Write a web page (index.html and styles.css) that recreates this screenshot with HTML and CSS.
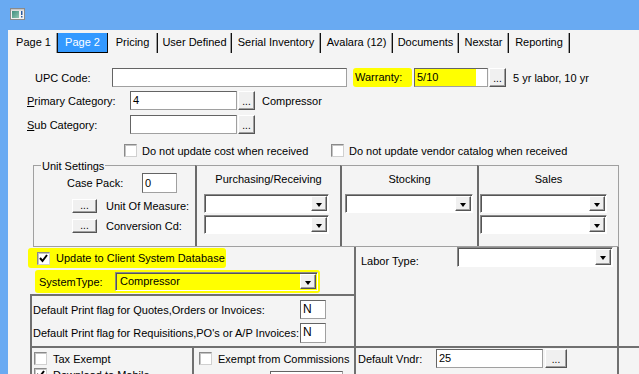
FILE: index.html
```html
<!DOCTYPE html>
<html lang="en">
<head>
  <meta charset="UTF-8">
  <title>Item Maintenance</title>
  <link rel="stylesheet" href="styles.css">
</head>
<body>
  <div class="titlebar">
    <svg class="appicon" viewBox="0 0 15 12" width="15" height="12">
      <defs>
        <linearGradient id="ig" x1="0" y1="0" x2="1" y2="1">
          <stop offset="0" stop-color="#3f8f7f"/>
          <stop offset="1" stop-color="#8fc4b0"/>
        </linearGradient>
      </defs>
      <rect x="0.5" y="0.5" width="14" height="11" fill="#f2f2f2" stroke="#8a8a8a"/>
      <rect x="1" y="1" width="13" height="1.5" fill="#c8c8c8"/>
      <rect x="2" y="3" width="7" height="7" fill="url(#ig)"/>
      <rect x="11" y="3" width="1.5" height="4" fill="#2a5aa0"/>
      <rect x="11" y="8" width="1.5" height="1.5" fill="#2a5aa0"/>
    </svg>
  </div>

  <div class="client">
    <div class="tabs">
      <div class="tab w48">Page 1</div>
      <div class="tab active w50">Page 2</div>
      <div class="tab w50">Pricing</div>
      <div class="tab w74">User Defined</div>
      <div class="tab w89">Serial Inventory</div>
      <div class="tab w72">Avalara (12)</div>
      <div class="tab w66">Documents</div>
      <div class="tab w50">Nexstar</div>
      <div class="tab w61">Reporting</div>
    </div>

    <div class="page">
      <div class="row r-upc">
        <span class="lbl w-upc">UPC Code:</span>
        <span class="field w-upcfield"></span>
        <span class="hl hl-warranty">Warranty:</span>
        <span class="field field-hl w-warranty">5/10</span>
        <span class="btn w-dots">...</span>
        <span class="note">5 yr labor, 10 yr</span>
      </div>
      <div class="row r-prim">
        <span class="lbl w-cat"><u>P</u>rimary Category:</span>
        <span class="field w-catfield">4</span>
        <span class="btn w-dots">...</span>
        <span class="note">Compressor</span>
      </div>
      <div class="row r-sub">
        <span class="lbl w-cat"><u>S</u>ub Category:</span>
        <span class="field w-catfield"></span>
        <span class="btn w-dots">...</span>
      </div>
      <div class="row r-checks">
        <span class="check-item w-check1"><span class="cb"></span>Do not update cost when received</span>
        <span class="check-item"><span class="cb"></span>Do not update vendor catalog when received</span>
      </div>

      <div class="units">
        <div class="unitset">
          <div class="legend">Unit Settings</div>
          <div class="urow u-case">
            <span class="lbl w-case">Case Pack:</span>
            <span class="field w-casefield">0</span>
          </div>
          <div class="urow u-btn">
            <span class="btn w-ubtn">...</span>
            <span class="ulabel">Unit Of Measure:</span>
          </div>
          <div class="urow u-btn">
            <span class="btn w-ubtn">...</span>
            <span class="ulabel">Conversion Cd:</span>
          </div>
        </div>
        <div class="ucol c-purch">
          <div class="colhead">Purchasing/Receiving</div>
          <div class="combo"><span class="combo-text"></span><span class="arrow"></span></div>
          <div class="combo"><span class="combo-text"></span><span class="arrow"></span></div>
        </div>
        <div class="ucol c-stock">
          <div class="colhead">Stocking</div>
          <div class="combo"><span class="combo-text"></span><span class="arrow"></span></div>
        </div>
        <div class="ucol c-sales">
          <div class="colhead">Sales</div>
          <div class="combo"><span class="combo-text"></span><span class="arrow"></span></div>
          <div class="combo"><span class="combo-text"></span><span class="arrow"></span></div>
        </div>
      </div>

      <div class="lower">
        <div class="lower-left">
          <div class="hl hl-update">
            <span class="cb checked"><svg viewBox="0 0 11 11" width="11" height="11"><polyline points="2,5 4.5,8 9,2" fill="none" stroke="#000" stroke-width="2"/></svg></span>
            Update to Client System Database
          </div>
          <div class="hl hl-system">
            <span class="lbl w-system">SystemType:</span>
            <div class="combo combo-hl"><span class="combo-text">Compressor</span><span class="arrow"></span></div>
          </div>
          <div class="printbox">
            <div class="prow">
              <span class="lbl w-print">Default Print flag for Quotes,Orders or Invoices:</span>
              <span class="field w-flag">N</span>
            </div>
            <div class="prow p-second">
              <span class="lbl w-print">Default Print flag for Requisitions,PO's or A/P Invoices:</span>
              <span class="field w-flag">N</span>
            </div>
          </div>
        </div>
        <div class="laborbox">
          <span class="lbl w-labor">Labor Type:</span>
          <div class="combo w-laborcombo"><span class="combo-text"></span><span class="arrow"></span></div>
        </div>
      </div>

      <div class="bottom">
        <div class="bcol">
          <div class="brow"><span class="cb"></span>Tax Exempt</div>
          <div class="brow"><span class="cb checked"><svg viewBox="0 0 11 11" width="11" height="11"><polyline points="2,5 4.5,8 9,2" fill="none" stroke="#000" stroke-width="2"/></svg></span>Download to Mobile</div>
        </div>
        <div class="bcol b-mid">
          <div class="brow"><span class="cb"></span>Exempt from Commissions</div>
          <span class="field w-midfield"></span>
        </div>
        <div class="bcol b-right">
          <div class="row r-vndr">
            <span class="lbl w-vndr">Default Vndr:</span>
            <span class="field w-vndrfield">25</span>
            <span class="btn w-vbtn">...</span>
          </div>
        </div>
      </div>
    </div>
  </div>
</body>
</html>
```

FILE: styles.css
```css
* {
  box-sizing: border-box;
}

body {
  margin: 0;
  width: 639px;
  height: 374px;
  overflow: hidden;
  background: #69aaf2;
  font: 11px "Liberation Sans", Arial, sans-serif;
  color: #000;
}

.titlebar {
  height: 30px;
  padding: 8px 0 0 10px;
}

.appicon {
  display: block;
}

.client {
  margin-left: 8px;
  height: 344px;
  background: #f4f4f4;
}

/* tab strip */
.tabs {
  display: flex;
  height: 23px;
  padding: 3px 0 0 2px;
}

.tab {
  flex: none;
  height: 20px;
  line-height: 19px;
  text-align: center;
  border-right: 1px solid #111;
  box-shadow: inset -1px 0 #a0a0a0;
  white-space: nowrap;
}

.tab.active {
  background: #3399ff;
  color: #fff;
  border-bottom: 1px solid #000;
  line-height: 18px;
  box-shadow: none;
}

.w48 { width: 48px; }
.w50 { width: 50px; }
.w61 { width: 61px; }
.w66 { width: 66px; }
.w72 { width: 72px; }
.w74 { width: 74px; }
.w89 { width: 89px; }

/* generic controls */
.row {
  display: flex;
  align-items: center;
  height: 19px;
}

.lbl {
  flex: none;
  white-space: nowrap;
}

.field {
  flex: none;
  display: block;
  height: 19px;
  line-height: 17px;
  padding-left: 2px;
  background: #fff;
  border: 1px solid #a0a0a0;
  border-top-color: #646464;
  border-left-color: #646464;
  white-space: nowrap;
}

.btn {
  flex: none;
  display: block;
  height: 19px;
  line-height: 19px;
  text-align: center;
  background: #f0f0f0;
  border: 1px solid #fff;
  border-right-color: #555;
  border-bottom-color: #555;
  box-shadow: inset -1px -1px #a0a0a0;
  font-size: 10px;
}

.note {
  margin-left: 7px;
  white-space: nowrap;
}

.hl {
  background: #ffff00;
  border-radius: 3px;
}

.cb {
  flex: none;
  display: inline-block;
  width: 13px;
  height: 13px;
  background: #fff;
  border: 1px solid #8a8a8a;
  border-right-color: #d0d0d0;
  border-bottom-color: #d0d0d0;
  box-shadow: inset 1px 1px #c4c4c4;
  vertical-align: middle;
}

.cb svg {
  display: block;
  margin: 0;
}

.combo {
  display: flex;
  height: 19px;
  background: #fff;
  border: 1px solid #fff;
  border-top-color: #8a8a8a;
  border-left-color: #8a8a8a;
  box-shadow: inset 1px 1px #555;
  padding: 1px;
}

.combo-text {
  flex: 1;
  line-height: 15px;
  padding-left: 3px;
}

.arrow {
  position: relative;
  width: 16px;
  background: #f0f0f0;
  border: 1px solid #fff;
  border-right-color: #555;
  border-bottom-color: #555;
  box-shadow: inset -1px -1px #a0a0a0;
}

.arrow::after {
  content: "";
  position: absolute;
  left: 4px;
  top: 6px;
  border-left: 3.5px solid transparent;
  border-right: 3.5px solid transparent;
  border-top: 4px solid #000;
}

/* top fields */
.page {
  padding-top: 15px;
}

.r-upc {
  padding-left: 27px;
}

.w-upc { width: 77px; }
.w-upcfield { width: 235px; }

.hl-warranty {
  display: block;
  width: 59px;
  height: 19px;
  line-height: 19px;
  margin-left: 6px;
  padding-left: 2px;
}

.field-hl {
  margin-left: 2px;
  background: linear-gradient(to right, #ffff00 85%, #fff 85%);
}

.w-warranty { width: 74px; }
.w-dots { width: 17px; margin-left: 1px; }

.r-prim {
  margin-top: 4px;
  padding-left: 19px;
}

.r-sub {
  margin-top: 5px;
  padding-left: 19px;
}

.w-cat { width: 103px; }
.w-catfield { width: 107px; }

.r-checks {
  margin-top: 10px;
  height: 13px;
  padding-left: 116px;
}

.check-item {
  display: flex;
  align-items: center;
  gap: 5px;
  white-space: nowrap;
}

.w-check1 { width: 207px; }

/* unit settings block */
.units {
  display: grid;
  grid-template-columns: 162px 145px 137px 142px;
  width: 586px;
  height: 82px;
  margin: 8px 0 0 25px;
  border-bottom: 1px solid #a0a0a0;
}

.unitset {
  border-top: 1px solid #a0a0a0;
  border-left: 1px solid #a0a0a0;
}

.legend {
  width: max-content;
  margin: -6px 0 0 7px;
  padding: 0 1px;
  line-height: 13px;
  background: #f4f4f4;
}

.urow {
  display: flex;
  align-items: center;
}

.u-case {
  height: 20px;
  padding-left: 33px;
}

.w-case { width: 75px; }
.w-casefield { width: 35px; height: 20px; line-height: 18px; }

.u-btn {
  height: 14px;
  margin-top: 6px;
  padding-left: 38px;
}

.w-ubtn {
  width: 25px;
  height: 14px;
  line-height: 11px;
}

.ulabel {
  margin-left: 9px;
  white-space: nowrap;
}

.ucol {
  border-top: 1px solid #a0a0a0;
  border-left: 2px solid #6a6a6a;
}

.c-sales {
  border-right: 1px solid #a0a0a0;
}

.colhead {
  height: 20px;
  padding-top: 7px;
  line-height: 13px;
  text-align: center;
  margin-bottom: 8px;
}

.ucol .combo + .combo {
  margin-top: 2px;
}

.c-purch .combo { width: 125px; margin-left: 7px; }
.c-stock .combo { width: 128px; margin-left: 3px; }
.c-sales .combo { width: 127px; margin-left: 1px; }

/* lower block */
.lower {
  display: grid;
  grid-template-columns: 324px 265px;
  margin-left: 22px;
  border-bottom: 2px solid #707070;
}

.hl-update {
  display: flex;
  align-items: center;
  gap: 6px;
  width: 198px;
  height: 20px;
  margin: 1px 0 0 -2px;
  padding-left: 9px;
}

.hl-system {
  display: flex;
  align-items: center;
  width: 285px;
  height: 23px;
  margin: 2px 0 0 5px;
  padding-left: 4px;
}

.w-system { width: 76px; }

.combo-hl {
  width: 203px;
  background: #ffff00;
}

.printbox {
  margin-top: 1px;
  height: 52px;
  border-top: 2px solid #707070;
  border-left: 2px solid #707070;
  padding: 4px 0 0 1px;
}

.prow {
  display: flex;
  align-items: center;
  height: 19px;
}

.p-second {
  margin-top: 4px;
  height: 20px;
}

.w-print { width: 267px; }
.w-flag { width: 26px; height: 100%; font-size: 12px; }

.laborbox {
  display: flex;
  align-items: flex-start;
  border-left: 2px solid #707070;
  border-right: 2px solid #707070;
  padding-left: 5px;
}

.w-labor {
  width: 96px;
  line-height: 20px;
  padding-top: 4px;
}

.w-laborcombo { width: 156px; height: 20px; }

/* bottom row */
.bottom {
  display: grid;
  grid-template-columns: 162px 162px 265px;
  margin-left: 22px;
}

.bcol {
  border-left: 2px solid #707070;
  height: 40px;
  padding: 4px 0 0 2px;
}

.brow {
  display: flex;
  align-items: center;
  gap: 6px;
  height: 13px;
  margin-bottom: 3px;
  white-space: nowrap;
}

.b-mid {
  padding-left: 5px;
}

.w-midfield {
  width: 73px;
  margin: 6px 0 0 71px;
}

.b-right {
  border-right: 2px solid #707070;
  padding: 1px 0 0 2px;
}

.w-vndr { width: 78px; }
.w-vndrfield { width: 107px; }
.w-vbtn { width: 22px; margin-left: 2px; }
```
